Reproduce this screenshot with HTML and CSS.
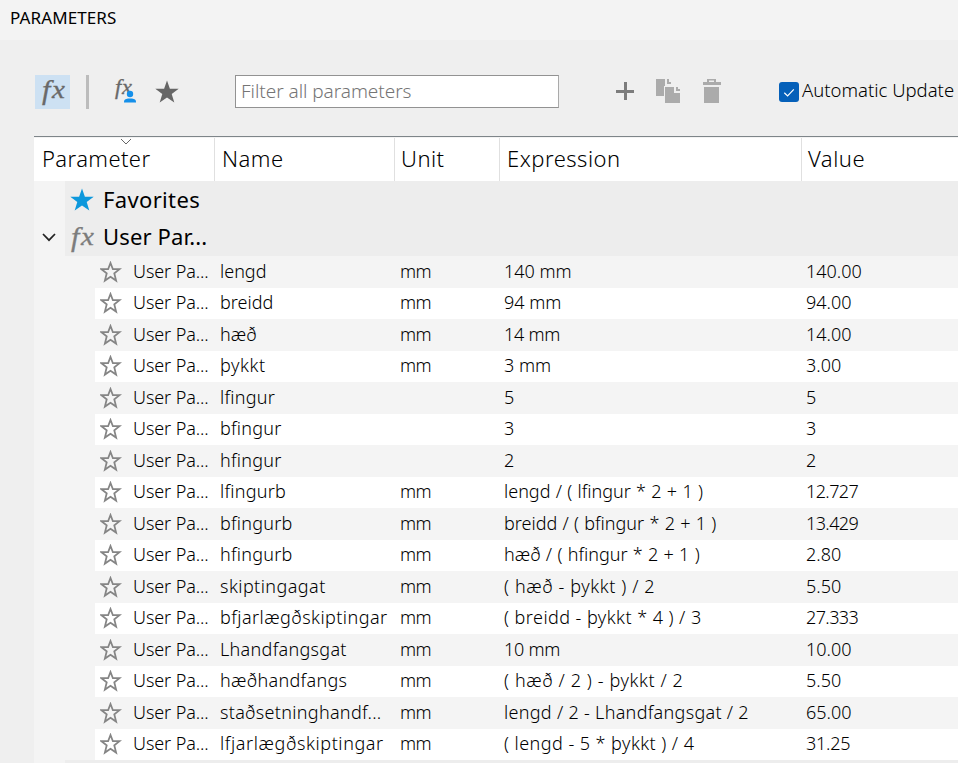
FILE: index.html
```
<!DOCTYPE html>
<html lang="is">
<head>
<meta charset="utf-8">
<title>Parameters</title>
<link rel="stylesheet" href="styles.css">
</head>
<body>
<svg class="defs" width="0" height="0" aria-hidden="true">
  <symbol id="star" viewBox="0 0 24 24"><path d="M12 0.5L14.9 8.8H23.7L16.7 14L19.3 22.5L12 17.4L4.7 22.5L7.3 14L0.3 8.8H9.1Z"/></symbol>
  <symbol id="star-line" viewBox="0 0 22 22"><path d="M10.5 2L12.9 8.2H19.5L14.3 12.4L16.1 19.6L10.5 15.8L4.9 19.6L6.7 12.4L1.5 8.2H8.1Z" fill="none" stroke="#858585" stroke-width="1.8"/></symbol>
</svg>
<header class="title">PARAMETERS</header>
<div class="toolbar">
  <button class="tool active"><span class="fx"><i>f</i><i class="x">x</i></span></button>
  <span class="divider"></span>
  <button class="tool user"><span class="fx small"><i>f</i><i class="x">x</i></span><svg class="person" viewBox="0 0 12 13"><circle cx="6" cy="4" r="3.2"/><path d="M0 12.5V11.6Q0 9 4 8.5H8Q12 9 12 11.6V12.5Z"/></svg></button>
  <button class="tool fav"><svg width="24" height="24"><use href="#star"/></svg></button>
  <input class="filter" placeholder="Filter all parameters">
  <svg class="add" viewBox="0 0 18 18"><path d="M9.5 0V18M0 9.5H18" stroke="#7c7c7c" stroke-width="3"/></svg>
  <svg class="copy" viewBox="0 0 24 24"><path d="M0 0H9V7H8V17H0ZM11 0V5H15V3H13V0ZM9 8H18V14H24V24H9ZM20 8V12H24V10H22V8Z"/></svg>
  <svg class="trash" viewBox="0 0 18 24"><path d="M4 0H13V3H18V6H0V3H4ZM6 1.5V3H11V1.5ZM1 8H16V24H1Z" fill-rule="evenodd"/></svg>
  <label class="auto"><span class="check"><svg viewBox="0 0 20 20"><path d="M5.3 10.8L8.6 14L14.8 7.4" fill="none" stroke="#fff" stroke-width="1.2"/></svg></span><span>Automatic Update</span></label>
</div>
<main class="table">
  <div class="head cols">
    <span>Parameter<svg class="sort" viewBox="0 0 12 7"><path d="M1 1L6 6L11 1" fill="none" stroke="#666"/></svg></span><span>Name</span><span>Unit</span><span>Expression</span><span>Value</span>
  </div>
  <div class="group"><span class="gutter"></span><div class="bar"><svg class="gstar" width="24" height="24"><use href="#star"/></svg><b>Favorites</b></div></div>
  <div class="group second"><span class="gutter"><svg class="chev" viewBox="0 0 14 9"><path d="M1 1L7 7.2L13 1" fill="none" stroke="#222" stroke-width="1.7"/></svg></span><div class="bar"><span class="fx gfx"><i>f</i><i class="x">x</i></span><b class="gname">User Par...</b></div></div>
  <div class="rows">
    <div class="row cols"><span><svg><use href="#star-line"/></svg>User Pa...</span><span>lengd</span><span>mm</span><span>140 mm</span><span>140.00</span></div>
    <div class="row cols"><span><svg><use href="#star-line"/></svg>User Pa...</span><span>breidd</span><span>mm</span><span>94 mm</span><span>94.00</span></div>
    <div class="row cols"><span><svg><use href="#star-line"/></svg>User Pa...</span><span>hæð</span><span>mm</span><span class="snug">14 mm</span><span>14.00</span></div>
    <div class="row cols"><span><svg><use href="#star-line"/></svg>User Pa...</span><span class="wide">þykkt</span><span>mm</span><span>3 mm</span><span>3.00</span></div>
    <div class="row cols"><span><svg><use href="#star-line"/></svg>User Pa...</span><span class="open">lfingur</span><span></span><span>5</span><span>5</span></div>
    <div class="row cols"><span><svg><use href="#star-line"/></svg>User Pa...</span><span class="open">bfingur</span><span></span><span>3</span><span>3</span></div>
    <div class="row cols"><span><svg><use href="#star-line"/></svg>User Pa...</span><span class="open">hfingur</span><span></span><span>2</span><span>2</span></div>
    <div class="row cols"><span><svg><use href="#star-line"/></svg>User Pa...</span><span class="open">lfingurb</span><span>mm</span><span class="spread">lengd / ( lfingur * 2 + 1 )</span><span class="tight">12.727</span></div>
    <div class="row cols"><span><svg><use href="#star-line"/></svg>User Pa...</span><span class="open">bfingurb</span><span>mm</span><span class="spread">breidd / ( bfingur * 2 + 1 )</span><span class="tight">13.429</span></div>
    <div class="row cols"><span><svg><use href="#star-line"/></svg>User Pa...</span><span class="open">hfingurb</span><span>mm</span><span class="spread">hæð / ( hfingur * 2 + 1 )</span><span>2.80</span></div>
    <div class="row cols"><span><svg><use href="#star-line"/></svg>User Pa...</span><span class="loose">skiptingagat</span><span>mm</span><span class="wide">( hæð - þykkt ) / 2</span><span>5.50</span></div>
    <div class="row cols"><span><svg><use href="#star-line"/></svg>User Pa...</span><span class="loose">bfjarlægðskiptingar</span><span>mm</span><span class="loose">( breidd - þykkt * 4 ) / 3</span><span class="tight">27.333</span></div>
    <div class="row cols"><span><svg><use href="#star-line"/></svg>User Pa...</span><span class="slight">Lhandfangsgat</span><span>mm</span><span class="snug">10 mm</span><span>10.00</span></div>
    <div class="row cols"><span><svg><use href="#star-line"/></svg>User Pa...</span><span class="slight">hæðhandfangs</span><span>mm</span><span class="wide">( hæð / 2 ) - þykkt / 2</span><span>5.50</span></div>
    <div class="row cols"><span><svg><use href="#star-line"/></svg>User Pa...</span><span class="slight">staðsetninghandf...</span><span>mm</span><span class="slight">lengd / 2 - Lhandfangsgat / 2</span><span>65.00</span></div>
    <div class="row cols"><span><svg><use href="#star-line"/></svg>User Pa...</span><span class="wide">lfjarlægðskiptingar</span><span>mm</span><span class="loose">( lengd - 5 * þykkt ) / 4</span><span class="snug">31.25</span></div>
  </div>
  <div class="group last"><span class="gutter"></span><div class="bar"></div></div>
</main>
</body>
</html>
```
FILE: styles.css
```
* { box-sizing: border-box; }
body { margin: 0; height: 763px; overflow: hidden; background: #efefef; color: #000; font: 300 18px "Noto Sans", sans-serif; }
.defs { position: absolute; }
svg { display: block; flex: none; }
.title { height: 40px; padding-left: 10px; background: #f3f3f3; font: 400 17px/35px "Noto Sans", sans-serif; letter-spacing: 0.1px; }
.toolbar { height: 96px; display: flex; align-items: flex-start; padding: 35px 0 0 35px; white-space: nowrap; }
.tool { border: 0; padding: 0; background: none; height: 34px; position: relative; flex: none; }
.active { width: 35px; background: #cde1f3; }
.fx { display: flex; font: italic 400 27px/32px "Liberation Serif", serif; color: #696969; -webkit-text-stroke: 0.3px currentColor; }
.fx i { transform: scaleX(1.12); transform-origin: 0 50%; }
.fx .x { font-size: 26px; margin-left: 2px; }
.active .fx { height: 34px; padding-left: 7px; line-height: 30px; }
.divider { width: 3px; height: 34px; margin-left: 16px; background: #bcbcbc; }
.user { width: 26px; margin-left: 22px; }
.small { font-size: 20px; height: 34px; line-height: 25px; padding-left: 4px; }
.fx.small .x { font-size: 20px; margin-left: 1px; }
.person { position: absolute; left: 13px; top: 15px; width: 12px; height: 13px; fill: #1590ea; }
.fav { margin-left: 18px; fill: #666; width: 24px; }
.fav svg { margin-top: -1px; }
.filter { width: 324px; height: 33px; margin-left: 56px; border: 1px solid #929292; border-right-color: #aaa; background: #fff; padding: 0 5px 1px; font: 300 19px "Noto Sans", sans-serif; letter-spacing: -0.05px; border-radius: 0; }
.filter::placeholder { color: #757575; opacity: 1; }
.add { width: 18px; height: 18px; margin: 7px 0 0 57px; }
.copy { width: 24px; height: 24px; margin: 4px 0 0 22px; fill: #ababab; }
.trash { width: 18px; height: 24px; margin: 4px 0 0 23px; fill: #ababab; }
.auto { display: flex; margin-left: 58px; height: 32px; line-height: 30px; font-size: 18.5px; }
.check { width: 20px; height: 20px; margin: 7px 3px 0 0; border-radius: 3px; background: #0560b9; }
.table { margin-left: 34px; border-top: 1px solid #7e8589; background: #f4f4f4; }
.cols { display: grid; grid-template-columns: 181px 180px 105px 302px 1fr; white-space: nowrap; }
.head { height: 44px; border-top: 1px solid #f3f3f3; background: #fff; font-size: 22px; line-height: 41px; letter-spacing: 0.5px; }
.head > span { padding-left: 7px; border-right: 1px solid #e0e0e0; position: relative; }
.head > span:first-child { padding-left: 8px; letter-spacing: 0.4px; }
.head > span:nth-child(3) { padding-left: 6px; }
.head > span:last-child { border: 0; padding-left: 6px; }
.sort { position: absolute; left: 86px; top: 0; width: 12px; height: 7px; }
.group { display: flex; height: 37px; }
.second { height: 38px; }
.gutter { width: 31px; }
.chev { width: 14px; height: 9px; margin: 15px 0 0 8px; }
.bar { flex: 1; display: flex; align-items: center; padding-left: 5px; background: #ededed; }
.bar b { font: 400 22px/32px "Noto Sans", sans-serif; letter-spacing: 0.35px; margin: 0 0 2px 9px; }
.bar .gname { letter-spacing: 0.15px; }
.gstar { fill: #0d98dc; }
.gfx { width: 24px; padding-left: 1px; color: #7c7c7c; }
.last { height: 10px; }
.row { height: 32px; line-height: 31px; padding-left: 61px; grid-template-columns: 125px 180px 104px 302px 1fr; background: linear-gradient(#f4f4f4, #f4f4f4) 0 0 / 61px 100% no-repeat #f4f4f4; }
.row:nth-child(even) { height: 31px; line-height: 29px; background-color: #fff; }
.row > span:first-child { display: flex; letter-spacing: -0.1px; }
.row > span:nth-child(3) { letter-spacing: -0.6px; }
.row svg { width: 22px; height: 22px; margin: 5px 11px 0 5px; }
.row:nth-child(even) svg { margin-top: 4px; }
.spread { word-spacing: 0.6px; }
.open { letter-spacing: 0.25px; font-variant-ligatures: common-ligatures; }
.slight { letter-spacing: 0.3px; }
.loose { letter-spacing: 0.45px; }
.wide { letter-spacing: 0.6px; }
.tight { letter-spacing: -0.6px; }
.snug { letter-spacing: -0.25px; }
```
